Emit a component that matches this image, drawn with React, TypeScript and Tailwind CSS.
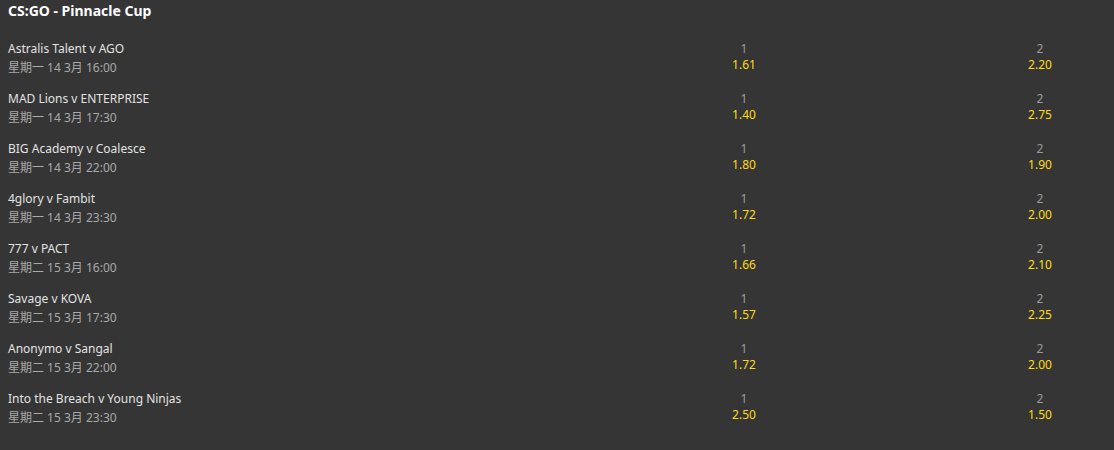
const matches = [
  { name: 'Astralis Talent v AGO', date: '星期一 14 3月 16:00', a: '1.61', b: '2.20' },
  { name: 'MAD Lions v ENTERPRISE', date: '星期一 14 3月 17:30', a: '1.40', b: '2.75' },
  { name: 'BIG Academy v Coalesce', date: '星期一 14 3月 22:00', a: '1.80', b: '1.90' },
  { name: '4glory v Fambit', date: '星期一 14 3月 23:30', a: '1.72', b: '2.00' },
  { name: '777 v PACT', date: '星期二 15 3月 16:00', a: '1.66', b: '2.10' },
  { name: 'Savage v KOVA', date: '星期二 15 3月 17:30', a: '1.57', b: '2.25' },
  { name: 'Anonymo v Sangal', date: '星期二 15 3月 22:00', a: '1.72', b: '2.00' },
  { name: 'Into the Breach v Young Ninjas', date: '星期二 15 3月 23:30', a: '2.50', b: '1.50' },
]

function Odd({ label, value }: { label: string; value: string }) {
  return (
    <div className="flex w-[148px] flex-col items-center pt-[2px]">
      <span className="text-[12px] leading-[16px] text-[#9b9b9b]">{label}</span>
      <span className="text-[12px] leading-[16px] text-[#ffdc0f]">{value}</span>
    </div>
  )
}

export default function App() {
  return (
    <div
      className="h-[450px] w-[1114px] bg-[#353535] pl-2 pr-0"
      style={{ fontFamily: '"Noto Sans", "Noto Sans CJK SC", sans-serif' }}
    >
      <h1 className="text-[14px] font-bold leading-[22px] text-white">CS:GO - Pinnacle Cup</h1>
      <div className="mt-[17px] flex flex-col">
        {matches.map((m) => (
          <div key={m.name} className="flex h-[50px]">
            <div className="flex flex-1 flex-col">
              <span className="text-[12px] leading-[20px] text-[#e2e2e2]">{m.name}</span>
              <span className="-mt-px text-[12px] leading-[19px] text-[#a9a9a9]">{m.date}</span>
            </div>
            <Odd label="1" value={m.a} />
            <div className="w-[148px]" />
            <Odd label="2" value={m.b} />
          </div>
        ))}
      </div>
    </div>
  )
}
